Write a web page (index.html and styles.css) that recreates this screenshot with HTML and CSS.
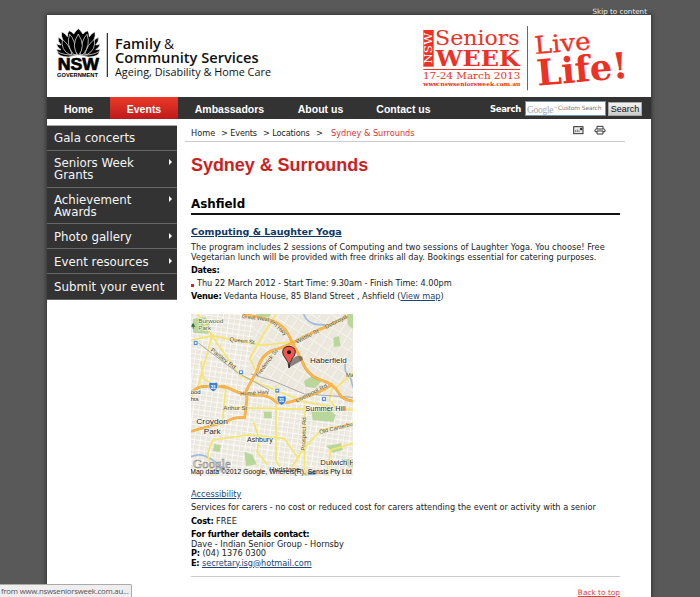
FILE: index.html
```html
<!DOCTYPE html>
<html lang="en">
<head>
<meta charset="utf-8">
<title>Sydney &amp; Surrounds - NSW Seniors Week</title>
<link rel="stylesheet" href="styles.css">
</head>
<body>
<div class="skip"><a>Skip to content</a></div>
<div class="page">
  <header class="header">
    <svg class="logo-facs" viewBox="21 45 699 246">
      <g fill="#000" stroke="#fff" stroke-width="2">
        <path d="M84 166Q52 166 49 147Q56 150 63 149Q50 142 50 131Q57 135 63 135Q52 124 55 112Q63 116 69 122Q62 108 65 95Q76 100 82 110Q82 98 87 92Q96 94 101 102Q107 92 115 86Q123 92 129 102Q134 94 143 92Q148 98 148 110Q154 100 165 95Q168 108 161 122Q167 116 175 112Q178 124 167 135Q173 135 180 131Q180 142 167 149Q174 150 181 147Q178 166 146 166Z"/>
        <path d="M88 163Q62 150 67 118Q87 133 96 163Z"/>
        <path d="M142 163Q168 150 163 118Q143 133 134 163Z"/>
        <path d="M101 164Q77 134 89 103Q105 118 110 164Z"/>
        <path d="M129 164Q153 134 141 103Q125 118 120 164Z"/>
        <path d="M115 167Q91 139 115 102Q139 139 115 167Z"/>
        <path d="M51 154Q70 167 115 166Q160 167 179 154Q176 171 145 171Q115 162 85 171Q54 171 51 154Z"/>
      </g>
      <g class="sans">
        <text class="b" x="53" y="211" font-size="50" textLength="124" lengthAdjust="spacingAndGlyphs" stroke="#000" stroke-width="2">NSW</text>
        <text class="b" x="51" y="230" font-size="15" textLength="123" lengthAdjust="spacingAndGlyphs">GOVERNMENT</text>
      </g>
      <path d="M202 99V231" stroke="#222" stroke-width="3.5"/>
      <g class="geo">
        <text class="sb" x="225" y="147" font-size="42" textLength="137" lengthAdjust="spacingAndGlyphs">Family</text>
        <text x="372" y="147" font-size="42" textLength="30" lengthAdjust="spacingAndGlyphs">&amp;</text>
        <text class="sb" x="225" y="190" font-size="42" textLength="431" lengthAdjust="spacingAndGlyphs">Community Services</text>
        <text x="225" y="228" font-size="31" textLength="468" lengthAdjust="spacingAndGlyphs">Ageing, Disability &amp; Home Care</text>
      </g>
    </svg>
    <svg class="logo-week" viewBox="15 45 708 246">
      <g class="slab" fill="#ee3124">
        <rect x="40" y="90" width="31" height="110"/>
        <text class="nsw" transform="translate(67 191) rotate(-90)" font-size="32" textLength="93" lengthAdjust="spacingAndGlyphs">NSW</text>
        <text x="75" y="136" font-size="61" textLength="254" lengthAdjust="spacingAndGlyphs">Seniors</text>
        <text class="b" x="77" y="199" font-size="68" textLength="252" lengthAdjust="spacingAndGlyphs">WEEK</text>
        <rect x="40" y="207" width="290" height="3"/>
        <text x="39" y="238" font-size="29" textLength="292" lengthAdjust="spacingAndGlyphs">17-24 March 2013</text>
        <text class="b" x="40" y="258" font-size="17" textLength="291" lengthAdjust="spacingAndGlyphs">www.nswseniorsweek.com.au</text>
        <rect x="351" y="78" width="3" height="193"/>
        <text transform="translate(376 162) rotate(-5)" font-size="73" textLength="168" lengthAdjust="spacingAndGlyphs" stroke="#ee3124">Live</text>
        <text class="b" transform="translate(383 257) rotate(-5)" font-size="108" textLength="274" lengthAdjust="spacingAndGlyphs">Life!</text>
      </g>
    </svg>
  </header>
  <nav class="nav">
    <a class="n-home">Home</a><a class="n-events">Events</a><a class="n-amb">Ambassadors</a><a class="n-about">About us</a><a class="n-contact">Contact us</a>
    <form class="search">
      <label>Search</label>
      <div class="field"><span class="google">Google<sup>™</sup></span><span class="custom">Custom Search</span></div>
      <button type="button">Search</button>
    </form>
  </nav>
  <div class="columns">
    <ul class="side">
      <li><span>Gala concerts</span></li>
      <li class="two more"><span>Seniors Week<br>Grants</span></li>
      <li class="two more"><span>Achievement<br>Awards</span></li>
      <li class="more"><span>Photo gallery</span></li>
      <li class="more"><span>Event resources</span></li>
      <li><span>Submit your event</span></li>
    </ul>
    <main class="main">
      <div class="crumbs">
        <span class="c1">Home</span><span class="c2">&gt; Events</span><span class="c3">&gt; Locations</span><span class="c4">&gt;</span><span class="here">Sydney &amp; Surrounds</span>
        <svg class="tools" viewBox="0 0 99 30">
          <g fill="none" stroke="#333" stroke-width="3">
            <rect x="2" y="5" width="28" height="21" fill="#e8e8e8"/>
            <path d="M8 21V15M13 21v-7M18 21v-5" stroke="#777"/>
            <path d="M22 10h5v4h-5z" fill="#222"/>
            <path d="M72 12V4h18v8M72 20h-6v-5q0-3 4-3h22q4 0 4 3v5h-6M72 18h18v9H72z"/>
          </g>
        </svg>
      </div>
      <div class="content">
        <h1>Sydney &amp; Surrounds</h1>
        <h2>Ashfield</h2>
        <h3><a>Computing &amp; Laughter Yoga</a></h3>
        <p class="desc"><span class="d1">The program includes 2 sessions of Computing and two sessions of Laughter Yoga. You choose! Free</span><br><span class="d2">Vegetarian lunch will be provided with free drinks all day. Bookings essential for catering purposes.</span></p>
        <p class="row"><b>Dates:</b></p>
        <p class="row date">Thu 22 March 2012 - Start Time: 9.30am - Finish Time: 4.00pm</p>
        <p class="row venue"><b>Venue:</b> Vedanta House, 85 Bland Street , Ashfield (<a>View map</a>)</p>
        <svg class="map" viewBox="10 12 486 486">
          <defs>
            <pattern id="streets" width="34" height="30" patternUnits="userSpaceOnUse" patternTransform="rotate(8)">
              <path d="M0 8H34M0 22H34M7 0V30M24 0V30" stroke="#fff" stroke-width="2.5"/>
              <path d="M0 10H34M9 0V30" stroke="#d9d5ca" stroke-width="1"/>
            </pattern>
            <pattern id="diagonal" width="26" height="32" patternUnits="userSpaceOnUse" patternTransform="rotate(32)">
              <path d="M0 8H26M7 0V32" stroke="#fff" stroke-width="2.5"/>
              <path d="M0 10H26M9 0V32" stroke="#d6d2c7" stroke-width="1"/>
            </pattern>
          </defs>
          <rect x="10" y="12" width="486" height="486" fill="#ece8dd"/>
          <rect x="10" y="12" width="486" height="486" fill="url(#streets)"/>
          <path d="M205 12H496V260L380 250L230 220L180 200Z" fill="#ece8dd"/>
          <path d="M205 12H496V260L380 250L230 220L180 200Z" fill="url(#diagonal)"/>
          <g fill="#b9d79b">
            <path d="M16 26l38-5 12 22-4 28-46-3zM205 12h45l-5 9-38 2zM349 213l24-14 28 15-18 20-30-4zM437 83l17-5 5 30-20 3zM478 12h18v45l-16-12zM228 305h24v20h-22zM370 295l55 4 20 16-8 20-62-4zM170 425l25 10 12 28-32 5zM415 408l45-8 6 20-30 8zM80 402l20 4-4 20-20-3zM350 480l20 3v15h-25zM462 448h34v24l-30-6z"/>
          </g>
          <g fill="none" stroke="#9dbce0" stroke-width="5"><path d="M348 12q10 30 45 32t40 5M473 160q-5 30 15 42l8 30M10 440q22-10 42-2t38 22l30 30"/></g>
          <g fill="none" stroke="#f5e56b" stroke-width="5">
            <path d="M31 12L73 77L155 196L350 276L496 300M10 91L73 77L225 106L310 96M265 14L228 70L187 145L205 185M73 77L30 235L12 260M40 155L48 208L114 238M114 238L107 310L105 345M107 292L268 296L496 300M265 225V450L290 498M352 285L350 498M197 335L215 385L208 425L240 465M75 390L180 375L290 385L328 440M75 390L60 430L75 498M300 492L345 420L400 360L496 340M435 230L425 270L450 298M496 400L430 420L415 498M442 235L496 190"/>
          </g>
          <path d="M190 192L260 214L350 252L496 262M20 90L150 188L245 240" fill="none" stroke="#aaa" stroke-width="3"/>
          <g fill="none" stroke="#e0a040" stroke-width="8" stroke-linejoin="round">
            <path d="M165 12L240 28Q284 41 300 70L343 153Q360 199 400 210Q440 221 455 252Q465 270 496 273"/>
            <path d="M174 247Q180 230 208 184Q220 130 263 119Q300 108 345 82L480 20"/>
            <path d="M12 246Q30 228 56 229H100Q120 230 135 240Q170 257 213 255Q246 256 268 278Q300 283 340 265Q410 245 434 221"/>
            <path d="M174 247L178 265L171 323Q140 320 115 335L10 364"/>
          </g>
          <g fill="none" stroke="#fdb748" stroke-width="6" stroke-linejoin="round">
            <path d="M165 12L240 28Q284 41 300 70L343 153Q360 199 400 210Q440 221 455 252Q465 270 496 273"/>
            <path d="M174 247Q180 230 208 184Q220 130 263 119Q300 108 345 82L480 20"/>
            <path d="M12 246Q30 228 56 229H100Q120 230 135 240Q170 257 213 255Q246 256 268 278Q300 283 340 265Q410 245 434 221"/>
            <path d="M174 247L178 265L171 323Q140 320 115 335L10 364"/>
          </g>
          <g class="road">
            <text transform="translate(162 24) rotate(7)" textLength="82" lengthAdjust="spacingAndGlyphs">Great West</text>
            <text transform="translate(246 35) rotate(43)" textLength="62" lengthAdjust="spacingAndGlyphs">ern Hwy</text>
            <text transform="translate(327 101) rotate(-27)" textLength="76" lengthAdjust="spacingAndGlyphs">Wattle St</text>
            <text transform="translate(415 57) rotate(-28)" textLength="72" lengthAdjust="spacingAndGlyphs">Dobroyd</text>
            <text transform="translate(125 93) rotate(7)" textLength="76" lengthAdjust="spacingAndGlyphs">Queen St</text>
            <text transform="translate(68 122) rotate(38)" textLength="90" lengthAdjust="spacingAndGlyphs">Paisley Rd</text>
            <text transform="translate(212 201) rotate(-53)" textLength="98" lengthAdjust="spacingAndGlyphs">Frederick St</text>
            <text transform="translate(158 257) rotate(-4)" textLength="86" lengthAdjust="spacingAndGlyphs">Hume Hwy</text>
            <text transform="translate(327 278) rotate(-27)" textLength="104" lengthAdjust="spacingAndGlyphs">Liverpool Rd</text>
            <text x="107" y="300" textLength="72" lengthAdjust="spacingAndGlyphs">Arthur St</text>
            <text transform="translate(352 422) rotate(-88)" textLength="100" lengthAdjust="spacingAndGlyphs">Prospect Rd</text>
            <text transform="translate(396 372) rotate(-14)" textLength="103" lengthAdjust="spacingAndGlyphs">Old Canterbu</text>
            <text x="475" y="202">Ma</text>
          </g>
          <g class="place">
            <text x="367" y="158" textLength="110" lengthAdjust="spacingAndGlyphs">Haberfield</text>
            <text x="353" y="303" textLength="121" lengthAdjust="spacingAndGlyphs">Summer Hill</text>
            <text x="26" y="343" textLength="95" lengthAdjust="spacingAndGlyphs">Croydon</text>
            <text x="48" y="372" textLength="51" lengthAdjust="spacingAndGlyphs">Park</text>
            <text x="178" y="395" textLength="77" lengthAdjust="spacingAndGlyphs">Ashbury</text>
            <text x="398" y="465" textLength="104" lengthAdjust="spacingAndGlyphs">Dulwich H</text>
            <text x="245" y="486" textLength="92" lengthAdjust="spacingAndGlyphs">Hurlstone</text>
            <g class="edge"><text x="9" y="251">ood</text><text x="9" y="274">hts</text></g>
            <g class="park"><text x="32" y="39" textLength="75" lengthAdjust="spacingAndGlyphs">Burwood</text><text x="32" y="61" textLength="38" lengthAdjust="spacingAndGlyphs">Park</text></g>
          </g>
          <path d="M16 38l-6 12h5v6h3v-6h5z" fill="#356b36"/>
          <g fill="#3f7ed0" stroke="#fff" stroke-width="2">
            <path d="M65 216q12 4 24 0q3 7 1 16q-4 10-13 13q-10-3-13-13q-2-9 1-16zM270 257q12 4 24 0q3 7 1 16q-4 10-13 13q-10-3-13-13q-2-9 1-16zM360 482q12 4 24 0q2 6 1 14h-26q-1-8 1-14z"/>
            <path d="M17 92h14v14H17zM153 180h14v14h-14zM262 235h14v14h-14zM402 260h14v14h-14z"/>
          </g>
          <g class="shield"><text x="69" y="236">31</text><text x="274" y="277">31</text></g>
          <g fill="#fff"><path d="M21 96h6v5h-6zM157 184h6v5h-6zM266 239h6v5h-6zM406 264h6v5h-6z"/></g>
          <path d="M304 173Q307 148 328 137Q350 137 345 150Q330 158 304 173Z" fill="#333" opacity=".55"/>
          <path d="M304 174Q304 157 293 144Q285 135 285 126Q286 109 304 109Q322 109 323 126Q323 136 315 144Q305 157 304 174Z" fill="#f2574f" stroke="#111" stroke-width="2.5"/>
          <circle cx="304" cy="127" r="6" fill="#111"/>
          <text class="gmark" x="16" y="475" font-size="35" textLength="113" lengthAdjust="spacingAndGlyphs">Google</text>
          <rect x="10" y="479" width="486" height="19" fill="#fff" opacity=".3"/>
          <text class="credit" x="8" y="493" font-size="19" textLength="484" lengthAdjust="spacingAndGlyphs">Map data ©2012 Google, Whereis(R), Sensis Pty Ltd</text>
        </svg>
        <p class="row acc"><a>Accessibility</a></p>
        <p class="row svc">Services for carers - no cost or reduced cost for carers attending the event or activity with a senior</p>
        <p class="row cost"><b>Cost:</b> FREE</p>
        <p class="contact"><b>For further details contact:</b><br>Dave - Indian Senior Group - Hornsby<br><b>P:</b> (04) 1376 0300<br><b>E:</b> <a>secretary.isg@hotmail.com</a></p>
        <div class="top"><a>Back to top</a></div>
      </div>
    </main>
  </div>
</div>
<div class="status">from www.nswseniorsweek.com.au...</div>
</body>
</html>
```
FILE: styles.css
```css
*, *::before, *::after { box-sizing: border-box; margin: 0; padding: 0; }
html, body { height: 597px; overflow: hidden; }
body { background: #595959; font-family: "DejaVu Sans", Verdana, sans-serif; font-size: 8.2px; color: #222; }
a { color: #1b4677; text-decoration: underline; }
b { color: #000; letter-spacing: -0.25px; }
.skip { height: 15px; width: 647px; text-align: right; font-size: 7.2px; line-height: 24px; }
.skip a { color: #eee; text-decoration: none; }
.page { width: 604px; height: 582px; margin-left: 47px; background: #fff; box-shadow: 0 0 4px 1px #333; }
.header { height: 82px; display: flex; justify-content: space-between; }
.logo-facs { width: 233px; height: 82px; }
.logo-week { width: 236px; height: 82px; }
.sans { font-family: "Liberation Sans", Arial, sans-serif; }
.geo { font-family: "Open Sans", sans-serif; fill: #111; }
.slab { font-family: "DejaVu Serif", serif; }
.b { font-weight: 700; }
.sb { font-weight: 600; }
.nsw { fill: #fff; }
.nav { height: 22px; background: #333; display: flex; font: bold 10.5px/24px "Liberation Sans", Arial, sans-serif; }
.nav a { color: #fff; text-decoration: none; text-align: center; white-space: nowrap; }
.n-home { width: 63px; }
.nav .n-events { width: 68px; background: linear-gradient(#ea3a28, #bf1a1b); }
.n-amb { width: 103px; }
.n-about { width: 79px; }
.n-contact { width: 87px; }
.search { display: flex; flex: 1; align-items: center; justify-content: flex-end; padding-right: 9px; padding-top: 1px; }
.search label { color: #fff; font: bold 8.5px "DejaVu Sans", sans-serif; letter-spacing: -0.3px; margin-right: 4px; }
.field { width: 81px; height: 15px; border: 1px solid #7394a8; background: #fff; display: flex; align-items: center; padding-left: 1px; white-space: nowrap; margin-right: 2px; }
.google { font: 9.5px/13px "Liberation Serif", serif; color: #aaa; width: 31px; letter-spacing: -0.3px; }
.google sup { font-size: 4px; vertical-align: 4px; }
.custom { font: 5.9px/13px "DejaVu Sans", sans-serif; color: #777; letter-spacing: -0.1px; }
.search button { width: 34px; height: 14px; border: 1px solid #aaa; background: linear-gradient(#f4f4f4, #ccc); font: 9px/12px "Liberation Sans", sans-serif; color: #111; }
.columns { display: flex; }
.side { width: 130px; margin-top: 6px; list-style: none; }
.side li { height: 25px; background: #333; border-bottom: 1px solid #666; color: #f5f5f5; font-size: 11.8px; line-height: 12px; padding: 7px 5px 0 7px; display: flex; justify-content: space-between; white-space: nowrap; }
.side li:first-child { height: 26px; border-top: 1px solid #aaa; padding-top: 6px; }
.side .two { height: 36.5px; }
.side li.two { padding-top: 6px; }
.side li:last-child { height: 26px; letter-spacing: 0.05px; }
.more::after { content: ""; border-left: 3px solid #fff; border-top: 3px solid transparent; border-bottom: 3px solid transparent; height: 6px; margin-top: 2px; }
.main { width: 440px; margin-left: 8px; }
.crumbs { height: 23px; border-bottom: 1px solid #ccc; display: flex; padding: 2px 0 0 6px; line-height: 25px; font-size: 8.2px; white-space: nowrap; }
.c1 { width: 30px; }
.c2 { width: 42px; letter-spacing: -0.15px; }
.c3 { width: 53px; letter-spacing: -0.15px; }
.c4 { width: 15px; }
.here { color: #dd3330; width: 242px; }
.tools { width: 33px; height: 10px; margin-top: 4px; }
.content { padding-left: 6px; width: 434px; white-space: nowrap; }
h1 { font: bold 18px/20px "Liberation Sans", Arial, sans-serif; color: #cc1f1f; padding-top: 13px; height: 50px; letter-spacing: -0.05px; }
h2 { font-size: 11.9px; line-height: 24px; height: 23px; width: 429px; border-bottom: 2px solid #111; color: #000; }
h3 { font-size: 9.5px; line-height: 12px; margin-top: 11px; height: 17px; }
h3 a { color: #0c3768; }
.desc { line-height: 9.5px; height: 21px; }
.d1 { letter-spacing: 0.03px; }
.d2 { letter-spacing: -0.01px; }
.row { line-height: 13px; height: 13px; }
.date { display: flex; align-items: center; gap: 3px; letter-spacing: -0.05px; }
.date::before { content: ""; width: 3px; height: 3px; background: #d8241f; margin-top: 3px; }
.venue { letter-spacing: -0.02px; }
.map { display: block; width: 162px; height: 162px; margin: 11px 0 12px; }
.road { font: 17px "Liberation Sans", sans-serif; fill: #514c37; stroke: #fff8d8; stroke-width: 1px; paint-order: stroke; }
.place { font: 21px "Liberation Sans", sans-serif; fill: #222; stroke: #fff; stroke-width: 3px; paint-order: stroke; }
.park { font-size: 18px; fill: #39643c; }
.edge { font-size: 18px; }
.shield { font: bold 14px "Liberation Sans", sans-serif; fill: #fff; }
.gmark { font-family: "Liberation Serif", serif; fill: #f4f4f4; stroke: #888; stroke-width: 1.5px; }
.credit { font-family: "Liberation Sans", sans-serif; fill: #111; }
.svc { letter-spacing: -0.01px; }
.cost { padding-top: 1px; }
.contact { line-height: 9.5px; margin-top: 3px; height: 46px; }
.contact a { letter-spacing: -0.05px; }
.top { border-top: 1px solid #ccc; text-align: right; width: 429px; padding-top: 10px; line-height: 11px; font-size: 7.4px; }
.top a { color: #d9423d; }
.status { position: absolute; left: 0; top: 584px; width: 132px; height: 13px; border: 1px solid #aaa; border-left: 0; border-bottom: 0; border-top-right-radius: 2px; background: #eee; color: #555; font: 7.8px/13px "Open Sans", sans-serif; letter-spacing: -0.22px; padding-left: 1px; white-space: nowrap; }
```
